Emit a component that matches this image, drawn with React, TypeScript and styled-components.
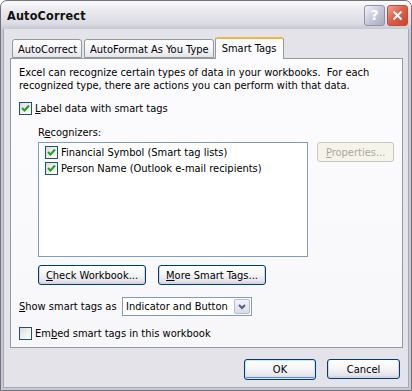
import styled, { createGlobalStyle } from "styled-components";

const GlobalStyle = createGlobalStyle`
  body {
    margin: 0;
    font-family: "DejaVu Sans Condensed", "DejaVu Sans", Tahoma, sans-serif;
    font-size: 11px;
    color: #000;
    background: #fff;
  }
`;

const Window = styled.div`
  width: 412px;
  height: 391px;
  box-sizing: border-box;
  display: flex;
  flex-direction: column;
  border: 1px solid #70707f;
  border-radius: 7px 7px 0 0;
  background: #c9c9d4;
  overflow: hidden;
`;

const TitleBar = styled.div`
  height: 28px;
  flex-shrink: 0;
  display: flex;
  align-items: center;
  padding: 0 3px 0 6px;
  background: linear-gradient(#fbfbfc 0%, #e9e9ee 35%, #dcdce4 80%, #c8c8d2 100%);
`;

const Title = styled.div`
  flex: 1;
  font-family: "DejaVu Sans Condensed", "DejaVu Sans", sans-serif;
  font-weight: bold;
  font-size: 12.5px;
  letter-spacing: 0.2px;
  color: #111;
`;

const CaptionButton = styled.div<{ $close?: boolean }>`
  width: 21px;
  height: 21px;
  box-sizing: border-box;
  margin-left: 2px;
  border: 1px solid ${(p) => (p.$close ? "#b7503d" : "#8f92a8")};
  border-radius: 3px;
  background: ${(p) =>
    p.$close
      ? "linear-gradient(135deg, #f3a595 0%, #e0604a 45%, #c8442c 100%)"
      : "linear-gradient(135deg, #f4f4f8 0%, #c7c9d8 50%, #a9abbf 100%)"};
  display: flex;
  align-items: center;
  justify-content: center;
  color: #fff;
  font-family: "DejaVu Sans", sans-serif;
  font-weight: bold;
  font-size: 14px;
`;

const Frame = styled.div`
  flex: 1;
  display: flex;
  flex-direction: column;
  margin: 0 2px 2px 2px;
  background: #e3e3e9;
  border: 1px solid #a9a9b6;
  border-top: none;
  padding: 7px 5px 0 6px;
`;

const TabRow = styled.div`
  display: flex;
  align-items: flex-end;
  height: 22px;
  padding-left: 2px;
  position: relative;
  z-index: 1;
`;

const Tab = styled.div<{ $active?: boolean }>`
  height: ${(p) => (p.$active ? "22px" : "19px")};
  box-sizing: border-box;
  display: flex;
  align-items: center;
  padding: ${(p) => (p.$active ? "0 7px 2px 6px" : "1px 4px 0 5px")};
  margin-right: ${(p) => (p.$active ? "0" : "2px")};
  margin-left: ${(p) => (p.$active ? "-1px" : "0")};
  margin-bottom: ${(p) => (p.$active ? "-1px" : "0")};
  border: 1px solid #919b9c;
  border-bottom: ${(p) => (p.$active ? "none" : "1px solid #919b9c")};
  border-top: ${(p) => (p.$active ? "2px solid #f3b63c" : "1px solid #919b9c")};
  border-radius: 3px 3px 0 0;
  background: ${(p) =>
    p.$active ? "#fcfcfe" : "linear-gradient(#ffffff 0%, #f3f3f7 60%, #e4e4ea 100%)"};
  white-space: nowrap;
`;

const Panel = styled.div`
  height: 290px;
  box-sizing: border-box;
  border: 1px solid #919b9c;
  background: linear-gradient(#fcfcfe 0%, #f7f7f9 100%);
  padding: 7px 8px 0 8px;
  display: flex;
  flex-direction: column;
`;

const Intro = styled.p`
  margin: 0;
  line-height: 13px;
  width: 385px;
`;

const CheckRow = styled.label<{ $top: number }>`
  display: flex;
  align-items: center;
  gap: 3px;
  height: 13px;
  margin-top: ${(p) => p.$top}px;
`;

const Box = styled.span`
  width: 13px;
  height: 13px;
  box-sizing: border-box;
  border: 1px solid #1c5180;
  background: linear-gradient(135deg, #dcdcd7 0%, #f4f4f0 60%, #ffffff 100%);
  display: inline-flex;
  align-items: center;
  justify-content: center;
  flex-shrink: 0;
`;

const Recognizers = styled.div`
  margin: 11px 0 0 19px;
  display: flex;
  flex-direction: column;
`;

const Caption = styled.div`
  line-height: 13px;
  margin-bottom: 3px;
`;

const ListArea = styled.div`
  display: flex;
  gap: 9px;
  align-items: flex-start;
`;

const ListBox = styled.div`
  width: 271px;
  height: 115px;
  box-sizing: border-box;
  border: 1px solid #7f9db9;
  background: #fff;
  padding: 3px 0 0 6px;
  display: flex;
  flex-direction: column;
  gap: 3px;
`;

const ListItem = styled.div`
  display: flex;
  align-items: center;
  gap: 3px;
  height: 13px;
`;

const Button = styled.button<{ $w: number; $def?: boolean; $disabled?: boolean }>`
  width: ${(p) => p.$w}px;
  height: ${(p) => (p.$def ? "21px" : "20px")};
  box-sizing: border-box;
  padding: 0;
  font: inherit;
  font-size: 11px;
  color: ${(p) => (p.$disabled ? "#aca899" : "#000")};
  border: 1px solid ${(p) => (p.$disabled ? "#c9c7ba" : "#003c74")};
  border-radius: 3px;
  background: ${(p) =>
    p.$disabled
      ? "#f5f4ea"
      : "linear-gradient(#ffffff 0%, #f4f4f6 50%, #e3e3ea 85%, #cfd0db 100%)"};
  box-shadow: ${(p) =>
    p.$def
      ? "inset 0 0 0 1px #cee7ff, inset 0 -1px 0 1px #6982ee"
      : p.$disabled
      ? "none"
      : "inset 0 -1px 0 1px #d6d6e2"};
  display: flex;
  align-items: center;
  justify-content: center;
`;

const ButtonRow = styled.div`
  display: flex;
  gap: 12px;
  margin: 8px 0 0 19px;
`;

const ShowRow = styled.div`
  display: flex;
  align-items: center;
  margin-top: 12px;
  height: 19px;
`;

const ShowLabel = styled.span`
  width: 103px;
  white-space: nowrap;
`;

const Select = styled.div`
  width: 130px;
  height: 19px;
  box-sizing: border-box;
  border: 1px solid #7f9db9;
  background: #fff;
  display: flex;
  align-items: center;
  padding: 0 1px 0 3px;
`;

const SelectText = styled.span`
  flex: 1;
  white-space: nowrap;
`;

const DropButton = styled.span`
  width: 16px;
  height: 15px;
  box-sizing: border-box;
  border: 1px solid #b6bacc;
  border-radius: 2px;
  background: linear-gradient(#f3f3f8 0%, #d9dbe6 100%);
  display: flex;
  align-items: center;
  justify-content: center;
`;

const Footer = styled.div`
  display: flex;
  justify-content: flex-end;
  gap: 11px;
  padding: 11px 3px 0 0;
`;

const Key = styled.u`
  text-decoration: underline;
  text-underline-offset: 1px;
`;

const Check = () => (
  <svg width="9" height="9" viewBox="0 0 9 9">
    <path d="M1 4 L3.5 6.5 L8 1.5" fill="none" stroke="#21a121" strokeWidth="2" />
  </svg>
);

const CheckBox = ({ checked }: { checked?: boolean }) => (
  <Box>{checked && <Check />}</Box>
);

export default function App() {
  return (
    <>
      <GlobalStyle />
      <Window>
        <TitleBar>
          <Title>AutoCorrect</Title>
          <CaptionButton>?</CaptionButton>
          <CaptionButton $close>
            <svg width="11" height="11" viewBox="0 0 11 11">
              <path d="M1.5 1.5 L9.5 9.5 M9.5 1.5 L1.5 9.5" stroke="#fff" strokeWidth="2" />
            </svg>
          </CaptionButton>
        </TitleBar>
        <Frame>
          <TabRow>
            <Tab>AutoCorrect</Tab>
            <Tab>AutoFormat As You Type</Tab>
            <Tab $active>Smart Tags</Tab>
          </TabRow>
          <Panel>
            <Intro>
              Excel can recognize certain types of data in your workbooks.&nbsp; For each
              recognized type, there are actions you can perform with that data.
            </Intro>
            <CheckRow $top={10}>
              <CheckBox checked />
              <span>
                <Key>L</Key>abel data with smart tags
              </span>
            </CheckRow>
            <Recognizers>
              <Caption>
                R<Key>e</Key>cognizers:
              </Caption>
              <ListArea>
                <ListBox>
                  <ListItem>
                    <CheckBox checked />
                    Financial Symbol (Smart tag lists)
                  </ListItem>
                  <ListItem>
                    <CheckBox checked />
                    Person Name (Outlook e-mail recipients)
                  </ListItem>
                </ListBox>
                <Button $w={77} $disabled>
                  <span>
                    <Key>P</Key>roperties...
                  </span>
                </Button>
              </ListArea>
            </Recognizers>
            <ButtonRow>
              <Button $w={108}>
                <span>
                  <Key>C</Key>heck Workbook...
                </span>
              </Button>
              <Button $w={108}>
                <span>
                  <Key>M</Key>ore Smart Tags...
                </span>
              </Button>
            </ButtonRow>
            <ShowRow>
              <ShowLabel>
                <Key>S</Key>how smart tags as
              </ShowLabel>
              <Select>
                <SelectText>Indicator and Button</SelectText>
                <DropButton>
                  <svg width="8" height="6" viewBox="0 0 8 6">
                    <path d="M1 1 L4 4 L7 1" fill="none" stroke="#4d6185" strokeWidth="2" />
                  </svg>
                </DropButton>
              </Select>
            </ShowRow>
            <CheckRow $top={11}>
              <CheckBox />
              <span>
                Em<Key>b</Key>ed smart tags in this workbook
              </span>
            </CheckRow>
          </Panel>
          <Footer>
            <Button $w={72} $def>
              OK
            </Button>
            <Button $w={73}>Cancel</Button>
          </Footer>
        </Frame>
      </Window>
    </>
  );
}
